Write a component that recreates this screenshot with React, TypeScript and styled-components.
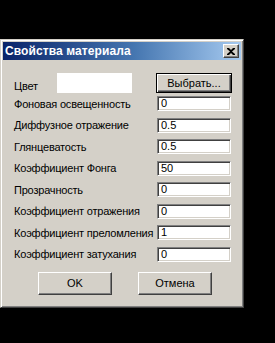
import React from 'react';
import styled, {createGlobalStyle} from 'styled-components';

const GlobalStyle = createGlobalStyle`
  html, body {
    margin: 0;
    padding: 0;
    background: #000;
  }
  body {
    width: 275px;
    height: 343px;
    overflow: hidden;
    font-family: "Liberation Sans", Arial, sans-serif;
  }
`;

const Page = styled.div`
  padding-top: 39px;
`;

const Window = styled.div`
  width: 244px;
  height: 269px;
  box-sizing: border-box;
  background: #d4d0c8;
  border-style: solid;
  border-width: 1px;
  border-color: #d4d0c8 #404040 #404040 #d4d0c8;
  display: flex;
  flex-direction: column;
  box-shadow: inset 1px 1px 0 #fff, inset -1px -1px 0 #808080;
  padding: 2px;
`;

const TitleBar = styled.div`
  height: 18px;
  display: flex;
  align-items: center;
  justify-content: space-between;
  padding: 0 2px 0 2px;
  background: linear-gradient(to right, #0a246a 0%, #4576b0 55%, #a6caf0 100%);
`;

const Title = styled.span`
  color: #fff;
  font-weight: bold;
  font-size: 12px;
  letter-spacing: 0.1px;
`;

const CloseButton = styled.div`
  width: 16px;
  height: 14px;
  box-sizing: border-box;
  background: #d4d0c8;
  border-style: solid;
  border-width: 1px;
  border-color: #fff #404040 #404040 #fff;
  box-shadow: inset -1px -1px 0 #808080;
  display: flex;
  align-items: center;
  justify-content: center;
`;

const Body = styled.div`
  flex: 1;
  padding: 13px 0 0 11px;
  display: flex;
  flex-direction: column;
`;

const Form = styled.div`
  display: grid;
  grid-template-columns: 143px 74px;
  grid-auto-rows: 15px;
  row-gap: 6.5px;
`;

const ColorRow = styled.div`
  display: grid;
  grid-template-columns: 43px 75px 24px 76px;
  height: 20px;
  margin-bottom: 3px;
`;

const Label = styled.span<{$low?: boolean}>`
  font-size: 11px;
  letter-spacing: -0.2px;
  color: #000;
  white-space: nowrap;
  align-self: ${p => (p.$low ? 'end' : 'center')};
  line-height: 13px;
  padding-top: 1px;
`;

const Swatch = styled.div`
  background: #fff;
`;

const Field = styled.div`
  height: 15px;
  box-sizing: border-box;
  background: #fff;
  border-style: solid;
  border-width: 1px;
  border-color: #808080 #fff #fff #808080;
  box-shadow: inset 1px 1px 0 #404040, inset -1px -1px 0 #d4d0c8;
  font-size: 11px;
  line-height: 13px;
  padding-left: 3px;
  color: #000;
`;

const Button = styled.div<{$default?: boolean}>`
  box-sizing: border-box;
  display: flex;
  align-items: center;
  justify-content: center;
  font-size: 11px;
  color: #000;
  background: #d4d0c8;
  border: 1px solid ${p => (p.$default ? '#000' : '#404040')};
  border-color: ${p => (p.$default ? '#000' : '#fff #404040 #404040 #fff')};
  box-shadow: ${p =>
    p.$default
      ? 'inset 1px 1px 0 #fff, inset -1px -1px 0 #404040, inset -2px -2px 0 #808080'
      : 'inset -1px -1px 0 #808080'};
`;

const Buttons = styled.div`
  display: grid;
  grid-template-columns: 74px 74px;
  column-gap: 26px;
  margin: 10px 0 0 24px;
  height: 23px;
`;

const rows: [string, string][] = [
  ['Фоновая освещенность', '0'],
  ['Диффузное отражение', '0.5'],
  ['Глянцеватость', '0.5'],
  ['Коэффициент Фонга', '50'],
  ['Прозрачность', '0'],
  ['Коэффициент отражения', '0'],
  ['Коэффициент преломления', '1'],
  ['Коэффициент затухания', '0'],
];

export default function App() {
  return (
    <Page>
      <GlobalStyle />
      <Window>
        <TitleBar>
          <Title>Свойства материала</Title>
          <CloseButton>
            <svg width="8" height="7" viewBox="0 0 8 7">
              <path d="M0 0h2l2 2 2-2h2v1L5 3.5 8 6v1H6L4 5 2 7H0V6l3-2.5L0 1z" fill="#000" />
            </svg>
          </CloseButton>
        </TitleBar>
        <Body>
          <ColorRow>
            <Label $low>Цвет</Label>
            <Swatch />
            <span />
            <Button $default>Выбрать...</Button>
          </ColorRow>
          <Form>
            {rows.map(([label, value]) => (
              <React.Fragment key={label}>
                <Label>{label}</Label>
                <Field>{value}</Field>
              </React.Fragment>
            ))}
          </Form>
          <Buttons>
            <Button>OK</Button>
            <Button>Отмена</Button>
          </Buttons>
        </Body>
      </Window>
    </Page>
  );
}
